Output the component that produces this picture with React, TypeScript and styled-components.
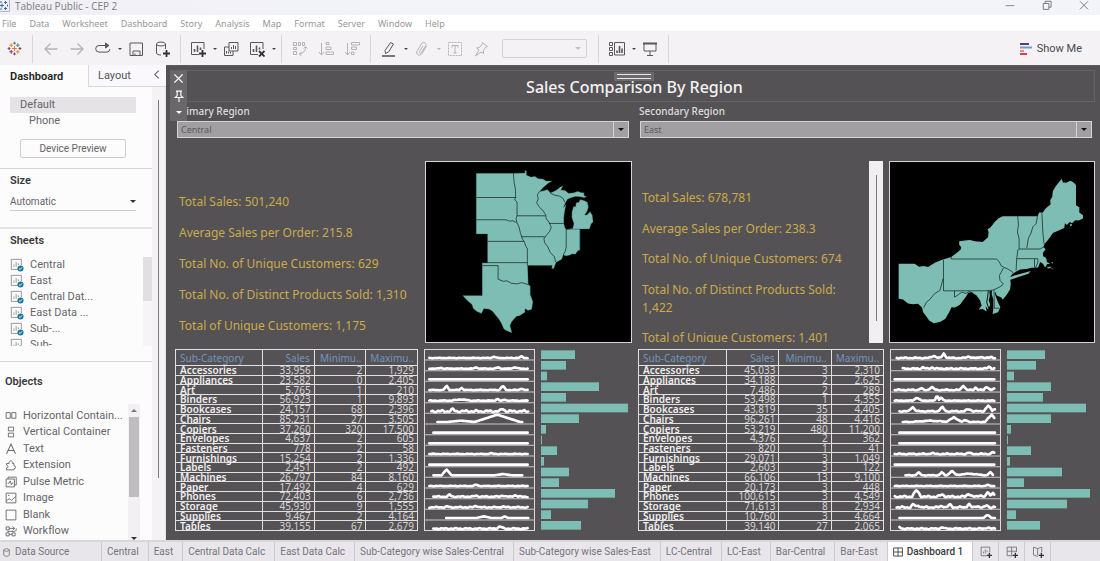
import React from "react";
import styled, { createGlobalStyle, css } from "styled-components";

const ui = `"Noto Sans", "Open Sans", sans-serif`;
const side = `Roboto, Inter, sans-serif`;
const canvasBg = "#555255";
const teal = "#7dbdb4";

const GlobalStyle = createGlobalStyle`
  * { box-sizing: border-box; }
  body { margin: 0; font-family: ${ui}; background: #fff; overflow-x: hidden; }
  button, select, input { font: inherit; color: inherit; }
`;

const Page = styled.div`
  display: flex;
  flex-direction: column;
  min-height: 100vh;
`;

/* ---------- window chrome ---------- */
const TitleBar = styled.header`
  display: flex;
  justify-content: space-between;
  height: 15px;
  background: linear-gradient(90deg, #f1eff6, #f2f4f9 40%);
  color: #7d7b80;
  font-family: "Open Sans", sans-serif;
  font-size: 10px;
  line-height: 13px;
`;
const TitleLabel = styled.div`
  display: flex;
  gap: 5px;
`;
const WindowControls = styled.div`
  display: flex;
  gap: 27px;
  padding-right: 11px;
`;
const WindowButton = styled.button`
  display: flex;
  padding: 0;
  width: 10px;
  height: 11px;
  border: 0;
  background: none;
`;
const MenuBar = styled.nav`
  display: flex;
  gap: 13px;
  height: 17px;
  padding-left: 2px;
  background: #fff;
  border-bottom: 1px solid #f1eff2;
  font-size: 9px;
  line-height: 18px;
`;
const MenuLink = styled.a`
  color: #98969a;
  text-decoration: none;
`;

const Toolbar = styled.div`
  display: flex;
  align-items: center;
  height: 33px;
  background: #f5f2f6;
`;
const ToolGroup = styled.div<{ $pad?: number }>`
  display: flex;
  align-items: center;
  height: 28px;
  padding: 0 ${(p) => p.$pad ?? 5}px;
  border-right: 1px solid #d9d6da;
`;
const StartGroup = styled(ToolGroup)`
  padding: 0 5px 0 1px;
`;
const ToolButton = styled.button<{ $faint?: boolean }>`
  display: flex;
  align-items: center;
  justify-content: center;
  width: 26px;
  height: 24px;
  padding: 0;
  border: 0;
  background: none;
  color: ${(p) => (p.$faint ? "#b5b2b6" : "#59575b")};
`;
const CaretButton = styled.button<{ $faint?: boolean }>`
  width: 7px;
  height: 24px;
  padding: 0;
  border: 0;
  background: none;
  display: flex;
  align-items: center;
  justify-content: center;
  color: ${(p) => (p.$faint ? "#b5b2b6" : "#444")};
`;
const Caret = styled.span<{ $size?: number }>`
  border: ${(p) => p.$size ?? 2}px solid transparent;
  border-top-color: currentColor;
  border-bottom: 0;
`;
const FitBox = styled.button`
  display: flex;
  align-items: center;
  justify-content: flex-end;
  width: 85px;
  height: 19px;
  margin: 0 6px 0 8px;
  padding: 0 5px;
  border: 1px solid #d4d1d5;
  border-radius: 2px;
  background: #f5f2f6;
  color: #c4c1c5;
`;
const ShowMe = styled.button`
  display: flex;
  align-items: center;
  gap: 5px;
  margin-left: auto;
  padding: 0 18px 0 0;
  border: 0;
  background: none;
  color: #4b494d;
  font: 11px ${side};
`;

/* ---------- body split ---------- */
const Main = styled.main`
  display: flex;
  flex: 1;
`;
const Sidebar = styled.aside`
  display: flex;
  flex-direction: column;
  width: 166px;
  flex: none;
  background: #fdfcfd;
  color: #66646a;
  font: 10px/16px ${side};
`;
const SideTabs = styled.div`
  display: flex;
  height: 22px;
  line-height: 21px;
`;
const SideTab = styled.button<{ $active?: boolean }>`
  padding: 0 0 0 ${(p) => (p.$active ? 10 : 9)}px;
  text-align: left;
  border: 0;
  width: ${(p) => (p.$active ? 88 : 64)}px;
  font-size: 11px;
  font-weight: ${(p) => (p.$active ? 600 : 400)};
  color: ${(p) => (p.$active ? "#222" : "#555")};
  background: ${(p) => (p.$active ? "#fdfcfd" : "#faf8fc")};
  ${(p) =>
    !p.$active &&
    css`
      border-left: 1px solid #dad7db;
      border-bottom: 1px solid #dad7db;
    `}
`;
const Collapse = styled.button`
  width: 14px;
  padding: 0;
  text-align: left;
  border: 0;
  border-bottom: 1px solid #dad7db;
  background: #faf8fc;
  color: #555;
`;
const SideBody = styled.div`
  display: flex;
  flex: 1;
`;
const SideContent = styled.div`
  display: flex;
  flex-direction: column;
  width: 152px;
`;
const SideTrack = styled.div`
  width: 14px;
  padding: 13px 0 0 6px;
  background: #f4f2f4;
  border-right: 1px solid #e4e2e4;
`;
const SideThumb = styled.div`
  width: 1px;
  height: 378px;
  background: #7c7a7d;
`;
const Section = styled.section`
  border-bottom: 1px solid #d6d3d7;
`;
const DeviceSection = styled(Section)`
  padding: 10px 16px 10px 10px;
  font-size: 11px;
`;
const DeviceRow = styled.div<{ $selected?: boolean }>`
  padding-left: ${(p) => (p.$selected ? 10 : 19)}px;
  background: ${(p) => (p.$selected ? "#e6e3e7" : "none")};
`;
const PreviewButton = styled.button`
  display: block;
  width: 106px;
  height: 19px;
  margin: 10px 0 0 10px;
  padding: 0;
  border: 1px solid #cfccd0;
  border-radius: 2px;
  background: #fdfcfd;
  font-size: 10px;
`;
const Heading = styled.h2`
  margin: 0;
  font-size: 11px;
  line-height: 16px;
  font-weight: 600;
  color: #39373c;
`;
const SizeSection = styled(Section)`
  padding: 4px 16px 16px 10px;
  border-bottom-width: 2px;
  border-color: #e6e4e7;
`;
const SizeSelect = styled.select`
  display: block;
  appearance: none;
  width: 100%;
  height: 18px;
  margin-top: 4px;
  padding: 0;
  border: 0;
  border-bottom: 1px solid #d0cdd1;
  border-radius: 0;
  background: none;
`;
const SelectWrap = styled.div`
  position: relative;
`;
const SelectCaret = styled.span<{ $size: number }>`
  position: absolute;
  right: 0;
  top: 7px;
  border: ${(p) => p.$size}px solid transparent;
  border-top-color: #333;
  border-bottom: 0;
  pointer-events: none;
`;
const SheetsSection = styled(Section)`
  padding: 4px 0 15px 10px;
`;
const ScrollBox = styled.div<{ $height: number; $top: number }>`
  display: flex;
  justify-content: space-between;
  height: ${(p) => p.$height}px;
  margin-top: ${(p) => p.$top}px;
  overflow: hidden;
`;
const ItemList = styled.ul`
  display: flex;
  flex-direction: column;
  margin: 0;
  padding: 0;
  list-style: none;
  font-size: 11px;
`;
const ObjectList = styled(ItemList)`
  justify-content: space-between;
  height: 131px;
  margin-top: 4px;
`;
const Item = styled.li`
  display: flex;
  flex: none;
  align-items: center;
  gap: 6px;
  height: 16px;
  white-space: nowrap;
`;
const SheetTrack = styled.div`
  width: 9px;
  background: #f6f4f7;
`;
const SheetThumb = styled.div`
  height: 44px;
  background: #e2dfe3;
`;
const ObjectsSection = styled.section`
  flex: 1;
  padding: 12px 12px 0 5px;
`;
const ObjectTrack = styled.div`
  display: flex;
  flex-direction: column;
  align-items: center;
  width: 12px;
  padding: 5px 0 0;
  background: #f2f0f2;
`;
const ObjectThumb = styled.div`
  width: 10px;
  height: 80px;
  margin: 5px 0 40px;
  background: #bfbdc0;
`;

/* ---------- dashboard canvas ---------- */
const Canvas = styled.section`
  position: relative;
  flex: 1;
  min-width: 0;
  padding: 4px 5px 9px 4px;
  background: ${canvasBg};
  border-top: 1px solid #5f5d60;
`;
const DashTitle = styled.h1`
  margin: 0;
  height: 32px;
  padding-left: 4px;
  border: 1px solid #656366;
  text-align: center;
  color: #f4f3f4;
  font-size: 16px;
  font-weight: 500;
  line-height: 32px;
`;
const DragHandle = styled.div`
  position: absolute;
  left: 50%;
  top: 6px;
  width: 40px;
  height: 9px;
  margin-left: -19px;
  padding: 2px 3px;
  background: #6b696c;
`;
const Grip = styled.div`
  height: 5px;
  border: solid #e8e7e8;
  border-width: 1px 0;
`;
const FloatTools = styled.div`
  position: absolute;
  left: 4px;
  top: 4px;
  display: flex;
  flex-direction: column;
  width: 17px;
  height: 51px;
  background: #69676a;
`;
const FloatButton = styled.button`
  display: flex;
  align-items: center;
  justify-content: center;
  height: 17px;
  padding: 0;
  border: 0;
  background: none;
  color: #fff;
`;
const Halves = styled.div`
  display: grid;
  grid-template-columns: 1fr 1fr;
  gap: 6px;
  padding-left: 5px;
`;
const Half = styled.div`
  min-width: 0;
`;
const Filter = styled.div`
  height: 59px;
  padding: 1px 3px 0 2px;
`;
const FilterLabel = styled.label`
  display: block;
  margin-left: -1px;
  color: #dddcdd;
  font-size: 10px;
  line-height: 16px;
  font-weight: 500;
`;
const FilterWrap = styled.div`
  position: relative;
  margin-top: 2px;
`;
const FilterSelect = styled.select`
  display: block;
  appearance: none;
  width: 100%;
  height: 17px;
  padding: 0 3px;
  border: 1px solid #d4d2d4;
  border-radius: 0;
  background: #a29fa2;
  color: #5a585b;
  font-size: 9px;
`;
const FilterArrow = styled.span`
  position: absolute;
  top: 0;
  right: 0;
  display: flex;
  align-items: center;
  justify-content: center;
  width: 16px;
  height: 17px;
  border: 1px solid #d4d2d4;
  color: #111;
  pointer-events: none;
`;
const TopRow = styled.div<{ $cols: string; $gap?: number }>`
  display: grid;
  grid-template-columns: ${(p) => p.$cols};
  column-gap: ${(p) => p.$gap ?? 0}px;
  height: 182px;
  margin-bottom: 6px;
`;
const ScrollPane = styled.div`
  display: flex;
  min-width: 0;
  height: 182px;
`;
const Totals = styled.div<{ $top: number }>`
  flex: 1;
  min-width: 0;
  padding: ${(p) => p.$top}px 0 0 4px;
  overflow: hidden;
  color: #c9ab4b;
  font-size: 12px;
  line-height: 18px;
`;
const Total = styled.p<{ $tight?: boolean }>`
  margin: 0 0 ${(p) => (p.$tight ? 12 : 13)}px;
`;
const TotalsScroll = styled.div`
  flex: none;
  width: 14px;
  padding: 14px 6px 22px 7px;
  background: #f1eff2;
`;
const TotalsThumb = styled.div`
  width: 1px;
  height: 100%;
  background: #7c7a7d;
`;
const MapBox = styled.div`
  min-width: 0;
  border: 1px solid #d6d4d7;
  background: #000;
  svg { display: block; width: 100%; height: 180px; }
`;
const BottomRow = styled.div<{ $cols: string }>`
  display: grid;
  grid-template-columns: ${(p) => p.$cols};
  column-gap: 6px;
  height: 182px;
`;
const DataTable = styled.table`
  width: 100%;
  height: 182px;
  table-layout: fixed;
  border-collapse: collapse;
  border: 1px solid #e2e1e2;
  color: #d5d3d5;
  font-size: 10px;
  line-height: 8px;
  col:first-child { width: 36%; }
`;
const Th = styled.th`
  height: 16px;
  padding: 0 4px;
  border: 1px solid #e2e1e2;
  color: #7196bd;
  font-weight: 400;
  text-align: right;
  white-space: nowrap;
  &:first-child { text-align: left; }
`;
const Td = styled.td`
  padding: 0 3px;
  border: 1px solid #e2e1e2;
  text-align: right;
`;
const NameTh = styled.th`
  padding: 0 0 0 4px;
  border: 1px solid #e2e1e2;
  color: #efeeef;
  font-weight: 600;
  text-align: left;
`;
const Chart = styled.svg`
  display: block;
  width: 100%;
  height: 182px;
`;

/* ---------- sheet tabs ---------- */
const SheetTabs = styled.nav`
  display: flex;
  height: 22px;
  border-top: 2px solid #d9d7da;
  background: #e8e6ea;
  font: 10px/20px ${side};
`;
const SheetTab = styled.a<{ $active?: boolean; $wide?: boolean }>`
  display: flex;
  align-items: center;
  gap: 4px;
  height: 20px;
  min-width: ${(p) => (p.$wide ? 102 : 0)}px;
  padding: ${(p) => (p.$wide ? "0 0 0 2px" : "0 9px 0 5px")};
  border-right: 1px solid #cdcace;
  background: ${(p) => (p.$active ? "#fff" : "none")};
  color: ${(p) => (p.$active ? "#39373c" : "#77757a")};
  font-weight: ${(p) => (p.$active ? 500 : 400)};
  text-decoration: none;
  white-space: nowrap;
`;
const NewTab = styled.button`
  display: flex;
  align-items: center;
  justify-content: center;
  width: 26px;
  padding: 0;
  border: 0;
  border-right: 1px solid #cdcace;
  background: none;
  color: #77757a;
`;

/* ---------- icons ---------- */
const Svg = ({ s = 16, w = 1, children }: { s?: number; w?: number; children: React.ReactNode }) => (
  <svg width={s} height={s} viewBox="0 0 16 16" fill="none" stroke="currentColor" strokeWidth={w} aria-hidden="true">
    {children}
  </svg>
);

const Logo = ({ colors }: { colors: string[] }) => (
  <Svg s={15} w={1.2}>
    <path stroke={colors[0]} d="M8 5.5v5M5.5 8h5" />
    <path stroke={colors[1]} d="M4.5 2.5v4M2.5 4.5h4M11.5 9.5v4M9.5 11.5h4" />
    <path stroke={colors[2]} d="M11.5 2.5v4M9.5 4.5h4M8 .8v3M6.5 2.3h3" />
    <path stroke={colors[3]} d="M4.5 9.5v4M2.5 11.5h4M8 12.3v3M6.5 13.8h3M2.2 6.5v3M.7 8h3M13.8 6.5v3M12.3 8h3" />
  </Svg>
);

const plus = <path strokeWidth="1.8" stroke="#333" d="M12.5 9v7M9 12.5h7" />;

const icons = {
  back: <path strokeWidth="1.3" d="M14.5 8H2M7.5 2.5 2 8l5.5 5.5" />,
  forward: <path strokeWidth="1.3" d="M1.5 8H14M8.5 2.5 14 8l-5.500 5.500" />,
  replay: (
    <>
      <path d="M11 4.500H4a3.300 3.300 0 0 0 0 6.600h8a3 3 0 0 0 2.800-3" />
      <path d="M10.500 2 14 4.500 10.500 7z" fill="currentColor" />
    </>
  ),
  save: (
    <>
      <path d="M2 2h12.500v12.500H2z" />
      <path d="M5 14.500V10h7v4.500M7 14.500v-2" />
    </>
  ),
  addData: (
    <>
      <ellipse cx="7" cy="3" rx="4.500" ry="2" />
      <path d="M2.500 3v9c0 1.200 2 2 4.500 2M11.500 3v5" />
      {plus}
    </>
  ),
  addSheet: (
    <>
      <path d="M9 13.500H1.500v-12H14V8" />
      <path strokeWidth="1.600" d="M4.500 11V8M7.500 11V4.500M10.500 9V6.500" />
      {plus}
    </>
  ),
  duplicate: (
    <>
      <path d="M6 1.500h9v8.500H6zM6 6H1.500v8.500h8.500V10" />
      <path d="M8.500 8V6M10.500 8V4M12.500 8V5M3.500 12.500V10M5.500 12.500v-2M7.500 12.500V11" />
    </>
  ),
  clear: (
    <>
      <path d="M9 13.500H1.500v-12H14V8" />
      <path strokeWidth="1.600" d="M4.500 11V8M7.500 11V4.500M10.500 8.500V6.500" />
      <path stroke="#333" strokeWidth="1.800" d="m10 10 5.500 5.500M15.500 10 10 15.500" />
    </>
  ),
  swap: (
    <>
      <path d="M1.500 1.500h3v3h-3zM6.500 1.500h2v3h-2zM10.500 1.500h2v3h-2zM1.500 6.500h3v2h-3zM1.500 10.500h3v3h-3z" />
      <path d="M13.500 6c0 4-2 6.500-6 7M11.500 7.500 13.500 5.500l1.800 2M9.500 10.800 7.300 13l2.200 2" />
    </>
  ),
  sortAsc: (
    <>
      <path d="M3.500 2v12M1 11l2.500 3L6 11" />
      <path d="M8 1.500h3v2H8zM8 6h5v2.500H8zM8 11h7.500v2.500H8z" />
    </>
  ),
  sortDesc: (
    <>
      <path d="M3.500 2v12M1 11l2.500 3L6 11" />
      <path d="M7.500 1.500h8v2.500h-8zM7.500 6h5v2.500h-5zM7.500 11h2.500v2.500H7.500z" />
    </>
  ),
  pen: (
    <>
      <path d="M4 9.500 9.500 1.500l3 1.500-5 8L4.500 12.500z" />
      <path strokeWidth="1.600" d="M1 15h13" />
    </>
  ),
  clip: <path d="M12.500 5 8 12.500c-1 1.700-3 2-4.200 1.200-1.300-.8-1.500-2.500-.6-4L7.500 2.800c.8-1.300 2.400-1.600 3.500-.9 1 .7 1.300 2 .5 3.300L7.500 11.500c-.5.700-1.300.8-1.800.4-.5-.3-.5-1 0-1.700l3.300-5.400" />,
  text: (
    <>
      <path strokeDasharray="2 1" d="M1.500 1.500h13v13h-13z" />
      <path d="M5 6.500v-2h6v2M8 4.500V12M6.500 12h3" />
    </>
  ),
  pin: <path d="m9.500 1.500 5 4-1.800.8-2.300 3.200.2 3L8 11l-5.500 4 3.500-6-2.500-2 3-.5 2.500-3.200z" />,
  cards: (
    <>
      <path d="M.5 1.500h3v3h-3zM.5 6.500h3v3h-3zM.5 11.500h3v3h-3zM5.500 1.500h10v12.500h-10z" />
      <path strokeWidth="1.600" d="M8 12V9.500M10.500 12V5M13 12V7.500" />
    </>
  ),
  present: (
    <>
      <path d="M2 2.500h12v7.500H2zM8 10v4.500M5 14.500h6" />
      <path strokeWidth="2" d="M1 2.500h14" />
    </>
  ),
};

const objectIcons: [string, React.ReactNode][] = [
  ["Horizontal Contain...", <path d="M1.500 3.500h5.500v7.500H1.500zM9 3.500h5.500v7.500H9z" />],
  ["Vertical Container", <path d="M4.500 1.500h7v5h-7zM4.500 9.500h7v5h-7z" />],
  ["Text", <path strokeWidth="1.400" d="M2 14.500 8 1.500l6 13M4.200 10h7.600" />],
  ["Extension", <path d="M2 6h3.500a2.500 2.500 0 1 1 4.500 0h2v3a2 2 0 1 1 0 4v1.500H2V12a2 2 0 0 0 0-4z" />],
  ["Pulse Metric", <path d="M4 4V1.500h11V12h-2.500M1.500 4h11v10.500h-11zM3.500 9.500h2l1.500-3 1.500 5 1-2h1.500" />],
  ["Image", <path d="M1.500 1.500h13v13h-13zM1.500 12l4-3 3 2 6-5M4 4.500h2" />],
  ["Blank", <path d="M1.500 1.500h13v13h-13z" />],
  ["Workflow", <path d="M1.500 2.500h4v4h-4zM5.500 4.500h7M10 2l3 2.500L10 7M15 4.500c0 4-1 4-4 4H3M1.500 10.500h4v4h-4zM5.500 12.500h4M9.500 10.500h4v4h-4z" />],
];

/* ---------- data ---------- */
type Row = [string, string, string, string];
const left: Row[] = [
  ["Accessories", "33,956", "2", "1,929"],
  ["Appliances", "23,582", "0", "2,405"],
  ["Art", "5,765", "1", "210"],
  ["Binders", "56,923", "1", "9,893"],
  ["Bookcases", "24,157", "68", "2,396"],
  ["Chairs", "85,231", "27", "3,505"],
  ["Copiers", "37,260", "320", "17,500"],
  ["Envelopes", "4,637", "2", "605"],
  ["Fasteners", "778", "2", "58"],
  ["Furnishings", "15,254", "2", "1,336"],
  ["Labels", "2,451", "2", "492"],
  ["Machines", "26,797", "84", "8,160"],
  ["Paper", "17,492", "4", "629"],
  ["Phones", "72,403", "6", "2,736"],
  ["Storage", "45,930", "9", "1,555"],
  ["Supplies", "9,467", "2", "4,164"],
  ["Tables", "39,155", "67", "2,679"],
];
const right: Row[] = [
  ["Accessories", "45,033", "3", "2,310"],
  ["Appliances", "34,188", "2", "2,625"],
  ["Art", "7,486", "2", "289"],
  ["Binders", "53,498", "1", "4,355"],
  ["Bookcases", "43,819", "35", "4,405"],
  ["Chairs", "96,261", "48", "4,416"],
  ["Copiers", "53,219", "480", "11,200"],
  ["Envelopes", "4,376", "2", "362"],
  ["Fasteners", "820", "1", "41"],
  ["Furnishings", "29,071", "3", "1,049"],
  ["Labels", "2,603", "3", "122"],
  ["Machines", "66,106", "13", "9,100"],
  ["Paper", "20,173", "3", "448"],
  ["Phones", "100,615", "3", "4,549"],
  ["Storage", "71,613", "8", "2,934"],
  ["Supplies", "10,760", "3", "4,664"],
  ["Tables", "39,140", "27", "2,065"],
];

// Each line: start x, end x, noise, then peaks as [x, height, half width].
type Line = [number, number, number, [number, number, number][]];
const leftLines: Line[] = [
  [16, 310, 1, [[208, 4, 10], [290, 5, 8]]],
  [16, 310, 1, [[50, 3, 8], [155, 4, 10], [220, 4, 10], [270, 4, 14]]],
  [16, 310, 0, []],
  [16, 310, 1, [[67, 13, 9], [112, 6, 8], [234, 13, 10], [290, 5, 8]]],
  [16, 310, 1, [[110, 4, 30], [218, 6, 8], [240, 3, 8]]],
  [22, 310, 4, [[85, 6, 10], [234, 8, 10]]],
  [40, 292, 0, [[110, 4, 40], [218, 22, 68]]],
  [28, 310, 0, []],
  [16, 310, 0, []],
  [16, 310, 1, [[200, 2, 10]]],
  [16, 310, 0, []],
  [28, 292, 0, [[67, 18, 15], [235, 4, 26]]],
  [16, 310, 1, [[155, 4, 10]]],
  [28, 310, 2, [[76, 6, 8], [155, 3, 10], [234, 4, 10], [270, 5, 10]]],
  [16, 310, 2, [[70, 3, 8], [155, 5, 10], [234, 3, 8]]],
  [66, 310, 0, [[178, 5, 22], [240, 5, 10]]],
  [28, 310, 2, [[226, 7, 12]]],
];
const rightLines: Line[] = [
  [20, 312, 2, [[130, 7, 14], [160, 13, 10], [234, 5, 12], [270, 5, 8], [300, 4, 8]]],
  [38, 312, 2, [[98, 4, 8], [125, 4, 8], [295, 7, 8]]],
  [14, 312, 0, []],
  [14, 312, 2, [[92, 6, 8], [124, 9, 12], [218, 14, 10], [255, 8, 8], [288, 11, 10], [308, 4, 6]]],
  [14, 312, 1, [[80, 9, 14], [140, 18, 7], [152, 11, 8]]],
  [28, 312, 2, [[67, 14, 12], [155, 13, 12], [234, 7, 14], [292, 17, 14], [310, 9, 6]]],
  [38, 312, 1, [[120, 4, 60], [190, 14, 24], [224, 6, 12], [302, 22, 20]]],
  [28, 312, 0, []],
  [28, 312, 0, []],
  [14, 312, 2, [[124, 3, 10], [234, 4, 10], [306, 6, 8]]],
  [14, 312, 0, []],
  [46, 306, 1, [[85, 9, 10], [154, 9, 10], [184, 14, 14], [235, 5, 50], [298, 9, 10]]],
  [14, 312, 1, [[290, 3, 10]]],
  [14, 312, 3, [[79, 20, 14], [155, 7, 12], [234, 9, 12], [268, 6, 8], [292, 16, 8], [306, 14, 8]]],
  [20, 312, 3, [[70, 10, 9], [85, 7, 8], [155, 5, 10], [178, 8, 10], [234, 12, 8], [260, 5, 8], [288, 7, 8]]],
  [28, 312, 0, [[290, 10, 12]]],
  [28, 312, 2, [[28, 5, 6], [155, 4, 10], [290, 4, 10]]],
];
const leftBars = [34, 25, 6, 58, 25, 87, 38, 5, 1, 16, 3, 28, 18, 74, 47, 10, 40];
const rightBars = [38, 29, 7, 44, 36, 79, 44, 4, 1, 24, 3, 55, 17, 83, 60, 9, 33];

const linePoints = ([x0, x1, noise, peaks]: Line, row: number) => {
  const base = row * 32 + 27;
  const pts: string[] = [];
  for (let x = x0; x <= x1; x += 4) {
    const lift = Math.max(0, ...peaks.map(([px, h, w]) => h * (1 - Math.abs(x - px) / w)));
    const jitter = noise * Math.sin(x * 0.31 + row * 2) * Math.cos(x * 0.13 + row);
    pts.push(`${x},${(base - lift - jitter).toFixed(1)}`);
  }
  return pts.join(" ");
};

const Sparklines = ({ lines }: { lines: Line[] }) => (
  <Chart viewBox="0 0 330 546" preserveAspectRatio="none" role="img" aria-label="Sales over time">
    <rect x="1.500" y="1.500" width="327" height="543" fill="none" stroke="#dcdbdc" strokeWidth="3" />
    {lines.map((line, i) => (
      <g key={i} fill="none">
        {i > 0 && <path d={`M0 ${i * 32 + 1}H330`} stroke="#c9c7c9" strokeWidth="3" />}
        <polyline points={linePoints(line, i)} stroke="#fff" strokeWidth="8" strokeLinejoin="round" strokeLinecap="round" />
      </g>
    ))}
  </Chart>
);

const Bars = ({ values, span }: { values: number[]; span: number }) => (
  <Chart viewBox={`0 0 ${span} 546`} preserveAspectRatio="none" role="img" aria-label="Sales bars">
    {values.map((v, i) => (
      <rect key={i} x="0" y={i * 32 + 4} width={v} height="26" fill={teal} />
    ))}
  </Chart>
);

const CentralMap = () => (
  <svg viewBox="18 21 617 538" role="img" aria-label="Central region map">
    <g fill={teal} stroke="#1c3a37" strokeWidth="1">
      <path d="M169 53H281L316 52 315 45 320 45 321 59 335 64 346 62 355 69 370 70 380 76 398 76 385 84 372 95 360 108 370 106 384 102 392 112 402 108 412 103 422 94 431 91 424 103 437 105 447 113 462 112 475 107 484 111 494 112 494 121 502 123 495 127 480 124 468 123 455 127 444 131 438 142 432 156 440 146 436 165 433 185 433 204 436 216 440 222 458 220 482 221V285L475 286 468 297 458 296 450 300 440 302 431 299 427 312 416 318 410 321 406 331 402 341 396 339 398 331H324L326 388 332 392V418L340 440 336 463 325 466 316 461 316 471 300 482 290 484 276 500 271 512 277 533 262 528 252 522 245 505 237 492 228 481 218 468 208 462 192 461 185 475 172 470 160 460 156 448 142 436 128 421H187V322H203V236H169Z" />
      <path d="M441 221 459 220 463 205 457 187 457 170 462 152 468 154 470 142 478 140 482 132 494 135 504 140 507 155 503 167 496 178 502 179 512 168 519 180 521 200 515 206 510 221Z" />
    </g>
    <g fill="none" stroke="#0b1615" strokeWidth="2">
      <path d="M169 126H289M281 53 283 80 287 100 288 126 285 133 292 140V181L289 190 292 202 298 215 302 232 308 250 315 262 318 272 323 280V331M169 193H258L270 197 280 196 290 202M203 258H314M187 322H323M188 331H235V372L250 378 262 377 275 384 292 386 305 382 326 388M292 181H377M360 108 353 118 356 130 351 142 360 156 370 165 378 178 380 190 388 200 395 215 390 228 380 240 373 250 375 262 385 275 392 292 404 303 408 320M388 204H433M305 244H375M440 222V275L437 288 431 299M392 112 405 119 420 122 430 128 436 140M482 221V285" />
    </g>
  </svg>
);

const EastMap = () => (
  <svg viewBox="92 21 608 538" role="img" aria-label="East region map">
    <g fill={teal}>
      <path d="M117 325H165L178 334 192 332 205 335 225 322 245 314 274 305 290 293 302 283 304 276 298 268 298 258 315 256 330 254 345 258 368 260 384 246 386 232 383 222 392 216 404 200 416 189 428 183H532L537 172H548L556 160 566 152 571 148 570 135 576 125 578 108 586 94 597 80 604 72 608 82 618 83 630 77 640 82 647 90V150L657 156V172L668 180V190L655 196 645 195 635 204 628 200 620 209 614 204 612 218 604 222 590 228 578 233 570 245 562 256 553 266 550 275 556 282 548 293 549 303 558 308 560 320 570 326 561 326 555 336 548 325 540 320 534 336 515 337 500 341 480 342 466 350 455 358 450 366 452 385 450 402 440 418 428 433 424 426 410 420 406 408 405 416 412 436 421 455 414 470 398 475 400 458 400 432 395 416 396 404 388 408 390 424 386 434 391 448 384 461 377 452 380 468 368 460 356 462 365 450 360 434 350 420 335 410 325 412 318 424 310 434 300 448 285 456 275 455 268 470 256 490 240 499 222 503 208 495 198 480 190 470 187 456 175 445 160 446 145 444 130 432 117 430Z" />
      <path d="M447 367 462 360 490 353 512 347 505 355 480 363 460 370 449 374ZM560 336l10-3 3 4-10 2zM572 322l6-2v4zM572 340l5-1v3zM628 208l6-2 2 4-6 3z" />
    </g>
    <g fill="none" stroke="#0b1615" strokeWidth="2">
      <path d="M274 305V311H410L418 320 424 332 445 342 458 350 460 358M251 314V406H375L398 404 408 400 420 394 430 386 420 375 418 360 424 350 430 338M249 370 246 385 240 405 225 414 210 432 200 440 192 456M284 406V425L295 418 305 410 318 414 328 408 340 414M473 183 475 210 472 230 477 250V282L473 284 470 310 468 345M477 281H540L552 274M470 310H533V322L526 337M523 311V336M532 183 528 205 518 215 512 235 505 248 500 278M545 172 548 230 551 262 554 268M402 404 403 458H418" />
      <path strokeWidth="3" d="M385 406 383 425 380 440 386 458M392 410 390 430 394 450" />
    </g>
  </svg>
);

const CrossTab = ({ rows }: { rows: Row[] }) => (
  <DataTable>
    <colgroup>
      <col /><col /><col /><col />
    </colgroup>
    <thead>
      <tr>
        <Th scope="col">Sub-Category</Th>
        <Th scope="col">Sales</Th>
        <Th scope="col">Minimu..</Th>
        <Th scope="col">Maximu..</Th>
      </tr>
    </thead>
    <tbody>
      {rows.map(([name, ...cells]) => (
        <tr key={name}>
          <NameTh scope="row">{name}</NameTh>
          {cells.map((c, i) => (
            <Td key={i}>{c}</Td>
          ))}
        </tr>
      ))}
    </tbody>
  </DataTable>
);

const RegionFilter = ({ id, label, value }: { id: string; label: string; value: string }) => (
  <Filter>
    <FilterLabel htmlFor={id}>{label}</FilterLabel>
    <FilterWrap>
      <FilterSelect id={id} defaultValue={value}>
        <option>{value}</option>
      </FilterSelect>
      <FilterArrow><Caret $size={3} /></FilterArrow>
    </FilterWrap>
  </Filter>
);

const Tool = ({ name, faint }: { name: keyof typeof icons; faint?: boolean }) => (
  <ToolButton $faint={faint} aria-label={name}><Svg>{icons[name]}</Svg></ToolButton>
);
const Drop = ({ faint }: { faint?: boolean }) => (
  <CaretButton $faint={faint} aria-label="More options"><Caret /></CaretButton>
);

const SheetIcon = () => (
  <Svg s={14}>
    <path stroke="#8c8a8e" d="M9 13H1.500V1.500H13V8M4.500 10V7.500M7 10V4.500M9.500 8V6" />
    <circle cx="12" cy="12" r="3.500" fill="#217a9c" stroke="none" />
    <path stroke="#fff" d="m10.300 12 1.200 1.200 2.200-2.400" />
  </Svg>
);

export default function App() {
  return (
    <Page>
      <GlobalStyle />
      <TitleBar>
        <TitleLabel>
          <svg width="10" height="12" viewBox="5 2 10 12" fill="none" stroke="#3f6d9a" strokeWidth="1" aria-hidden="true">
            <path stroke="#b9b7bb" d="M14.500 2v11.500H5" />
            <path d="M7 5.500v4M5 7.500h4M10.500 3v3M9 4.500h3M10.500 9v3M9 10.500h3M6 3v2M12.500 6.500v2M6 10v2" />
          </svg>
          Tableau Public - CEP 2
        </TitleLabel>
        <WindowControls>
          <WindowButton aria-label="Minimize"><Svg s={10} w={1.4}><path d="M1 9h14" /></Svg></WindowButton>
          <WindowButton aria-label="Restore"><Svg s={10} w={1.6}><path d="M2 5.500h9V15H2zM5 5.500V2h9.500v9.500H11" /></Svg></WindowButton>
          <WindowButton aria-label="Close"><Svg s={10} w={1.6}><path d="m1.500 2 13 13M14.500 2l-13 13" /></Svg></WindowButton>
        </WindowControls>
      </TitleBar>
      <MenuBar>
        {["File", "Data", "Worksheet", "Dashboard", "Story", "Analysis", "Map", "Format", "Server", "Window", "Help"].map((m) => (
          <MenuLink href="#" key={m}>{m}</MenuLink>
        ))}
      </MenuBar>
      <Toolbar>
        <StartGroup>
          <ToolButton aria-label="Start page"><Logo colors={["#e8762d", "#eb9129", "#5b879b", "#7c4a6e"]} /></ToolButton>
        </StartGroup>
        <ToolGroup>
          <Tool name="back" faint /><Tool name="forward" faint /><Tool name="replay" /><Drop />
          <Tool name="save" /><Tool name="addData" />
        </ToolGroup>
        <ToolGroup $pad={4}>
          <Tool name="addSheet" /><Drop /><Tool name="duplicate" /><Tool name="clear" /><Drop />
        </ToolGroup>
        <ToolGroup>
          <Tool name="swap" faint /><Tool name="sortAsc" faint /><Tool name="sortDesc" faint />
        </ToolGroup>
        <ToolGroup>
          <Tool name="pen" /><Drop /><Tool name="clip" faint /><Drop faint />
          <Tool name="text" faint /><Tool name="pin" faint />
          <FitBox aria-label="Fit"><Caret $size={3} /></FitBox>
        </ToolGroup>
        <ToolGroup>
          <Tool name="cards" /><Drop /><Tool name="present" />
        </ToolGroup>
        <ShowMe>
          <svg width="12" height="12" viewBox="0 0 12 12" aria-hidden="true">
            <path fill="#5b3d6e" d="M0 0h9v2H0z" />
            <path fill="#6e9bd1" d="M0 3.500h12v2H0z" />
            <path fill="#f28e5c" d="M0 7h4v2H0z" />
            <path fill="#e5395f" d="M0 10h7v2H0z" />
          </svg>
          Show Me
        </ShowMe>
      </Toolbar>

      <Main>
        <Sidebar>
          <SideTabs>
            <SideTab $active>Dashboard</SideTab>
            <SideTab>Layout</SideTab>
            <Collapse aria-label="Collapse pane"><Svg s={9} w={1.8}><path d="M12 1 5 8l7 7" /></Svg></Collapse>
          </SideTabs>
          <SideBody>
            <SideContent>
              <DeviceSection>
                <DeviceRow $selected>Default</DeviceRow>
                <DeviceRow>Phone</DeviceRow>
                <PreviewButton>Device Preview</PreviewButton>
              </DeviceSection>
              <SizeSection>
                <Heading as="label" htmlFor="size">Size</Heading>
                <SelectWrap>
                  <SizeSelect id="size"><option>Automatic</option></SizeSelect>
                  <SelectCaret $size={3} />
                </SelectWrap>
              </SizeSection>
              <SheetsSection>
                <Heading>Sheets</Heading>
                <ScrollBox $height={89} $top={8}>
                  <ItemList>
                    {["Central", "East", "Central Dat...", "East Data ...", "Sub-...", "Sub-..."].map((s, i) => (
                      <Item key={i}><SheetIcon />{s}</Item>
                    ))}
                  </ItemList>
                  <SheetTrack><SheetThumb /></SheetTrack>
                </ScrollBox>
              </SheetsSection>
              <ObjectsSection>
                <Heading>Objects</Heading>
                <ScrollBox $height={136} $top={14}>
                  <ObjectList>
                    {objectIcons.map(([name, icon]) => (
                      <Item key={name}><Svg s={12} w={1.2}>{icon}</Svg>{name}</Item>
                    ))}
                  </ObjectList>
                  <ObjectTrack>
                    <svg width="6" height="3" aria-hidden="true"><path d="M0 3 3 0l3 3z" fill="#777" /></svg>
                    <ObjectThumb />
                    <svg width="6" height="3" aria-hidden="true"><path d="M0 0h6L3 3z" fill="#333" /></svg>
                  </ObjectTrack>
                </ScrollBox>
              </ObjectsSection>
            </SideContent>
            <SideTrack><SideThumb /></SideTrack>
          </SideBody>
        </Sidebar>

        <Canvas>
          <DashTitle>Sales Comparison By Region</DashTitle>
          <DragHandle><Grip /></DragHandle>
          <Halves>
            <Half>
              <RegionFilter id="primary" label="Primary Region" value="Central" />
              <TopRow $cols="250fr 207fr">
                <Totals $top={32}>
                  <Total>Total Sales: 501,240</Total>
                  <Total>Average Sales per Order: 215.8</Total>
                  <Total>Total No. of Unique Customers: 629</Total>
                  <Total>Total No. of Distinct Products Sold: 1,310</Total>
                  <Total>Total of Unique Customers: 1,175</Total>
                </Totals>
                <MapBox><CentralMap /></MapBox>
              </TopRow>
              <BottomRow $cols="243fr 111fr 91fr">
                <CrossTab rows={left} />
                <Sparklines lines={leftLines} />
                <Bars values={leftBars} span={91} />
              </BottomRow>
            </Half>
            <Half>
              <RegionFilter id="secondary" label="Secondary Region" value="East" />
              <TopRow $cols="245fr 206fr" $gap={6}>
                <ScrollPane>
                  <Totals $top={28}>
                    <Total>Total Sales: 678,781</Total>
                    <Total $tight>Average Sales per Order: 238.3</Total>
                    <Total>Total No. of Unique Customers: 674</Total>
                    <Total $tight>Total No. of Distinct Products Sold: 1,422</Total>
                    <Total>Total of Unique Customers: 1,401</Total>
                  </Totals>
                  <TotalsScroll><TotalsThumb /></TotalsScroll>
                </ScrollPane>
                <MapBox><EastMap /></MapBox>
              </TopRow>
              <BottomRow $cols="246fr 111fr 88fr">
                <CrossTab rows={right} />
                <Sparklines lines={rightLines} />
                <Bars values={rightBars} span={88} />
              </BottomRow>
            </Half>
          </Halves>
          <FloatTools>
            <FloatButton aria-label="Remove"><Svg s={11} w={2}><path d="m2 2 12 12M14 2 2 14" /></Svg></FloatButton>
            <FloatButton aria-label="Fix"><Svg s={12} w={1.5}><path d="M4 1.500h8M5.500 1.500v6L3 10h10l-2.500-2.500v-6M8 10v6" /></Svg></FloatButton>
            <FloatButton aria-label="More"><Caret $size={3} /></FloatButton>
          </FloatTools>
        </Canvas>
      </Main>

      <SheetTabs>
        <SheetTab href="#" $wide>
          <Svg s={9} w={1.5}><path d="M3 3.500c0-3 10-3 10 0v9c0 3-10 3-10 0zM3 3.500c0 3 10 3 10 0" /></Svg>
          Data Source
        </SheetTab>
        {["Central", "East", "Central Data Calc", "East Data Calc", "Sub-Category wise Sales-Central", "Sub-Category wise Sales-East", "LC-Central", "LC-East", "Bar-Central", "Bar-East"].map((t) => (
          <SheetTab href="#" key={t}>{t}</SheetTab>
        ))}
        <SheetTab href="#" $active>
          <Svg s={10} w={1.4}><path d="M1 1.500h14v13H1zM8 1.500v13M1 8h14" /></Svg>
          Dashboard 1
        </SheetTab>
        <NewTab aria-label="New worksheet"><Svg s={12} w={1.2}><path d="M9 13H1.500V1.500H13V8M4.500 10V7.500M7 10V4.500M9.500 8V6" />{plus}</Svg></NewTab>
        <NewTab aria-label="New dashboard"><Svg s={12} w={1.2}><path d="M9 13H1.500V1.500H14V8M7.500 1.500V13M1.500 7H14" />{plus}</Svg></NewTab>
        <NewTab aria-label="New story"><Svg s={12} w={1.2}><path d="M7.500 3.500v9M7.500 3.500 2 1.500v10.500l5.500 2M7.500 3.500l5.500-2V8" />{plus}</Svg></NewTab>
      </SheetTabs>
    </Page>
  );
}
